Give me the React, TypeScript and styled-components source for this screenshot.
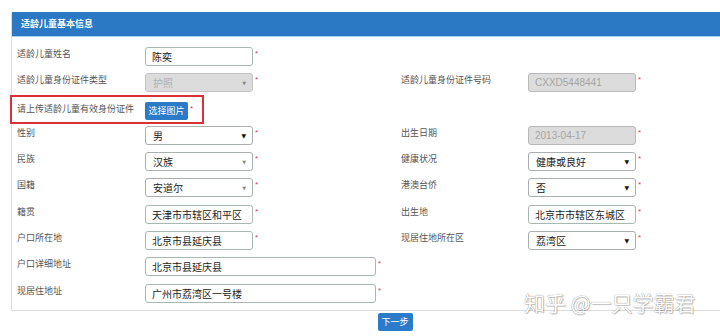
import styled, { createGlobalStyle } from "styled-components";

const GlobalStyle = createGlobalStyle`
  html, body {
    margin: 0;
    padding: 0;
    background: #fff;
    overflow: hidden;
  }
  body {
    font-family: "Liberation Sans", "Noto Sans CJK SC", sans-serif;
  }
`;

type Ctl = { kind: "input" | "select" | "disabled" | "disabledSelect"; value: string; arrow?: "dark" | "light"; wide?: boolean };

type RowData = {
  left: [string, Ctl];
  right?: [string, Ctl];
};

const rows: RowData[] = [
  { left: ["适龄儿童姓名", { kind: "input", value: "陈奕" }] },
  {
    left: ["适龄儿童身份证件类型", { kind: "disabledSelect", value: "护照", arrow: "light" }],
    right: ["适龄儿童身份证件号码", { kind: "disabled", value: "CXXD5448441" }],
  },
];

const rowsAfter: RowData[] = [
  {
    left: ["性别", { kind: "select", value: "男", arrow: "dark" }],
    right: ["出生日期", { kind: "disabled", value: "2013-04-17" }],
  },
  {
    left: ["民族", { kind: "select", value: "汉族", arrow: "light" }],
    right: ["健康状况", { kind: "select", value: "健康或良好", arrow: "dark" }],
  },
  {
    left: ["国籍", { kind: "select", value: "安道尔", arrow: "light" }],
    right: ["港澳台侨", { kind: "select", value: "否", arrow: "dark" }],
  },
  {
    left: ["籍贯", { kind: "input", value: "天津市市辖区和平区" }],
    right: ["出生地", { kind: "input", value: "北京市市辖区东城区" }],
  },
  {
    left: ["户口所在地", { kind: "input", value: "北京市县延庆县" }],
    right: ["现居住地所在区", { kind: "select", value: "荔湾区", arrow: "dark" }],
  },
  { left: ["户口详细地址", { kind: "input", value: "北京市县延庆县", wide: true }] },
  { left: ["现居住地址", { kind: "input", value: "广州市荔湾区一号楼", wide: true }] },
];

const Control = ({ c }: { c: Ctl }) => {
  const off = c.kind === "disabled" || c.kind === "disabledSelect";
  return (
    <FieldCell>
      {c.kind === "input" || c.kind === "disabled" ? (
        <TextInput readOnly value={c.value} $off={off} $wide={!!c.wide} />
      ) : (
        <SelectBox $off={off}>
          <span>{c.value}</span>
          <Arrow $dark={c.arrow === "dark"}>▼</Arrow>
        </SelectBox>
      )}
      <Star>*</Star>
    </FieldCell>
  );
};

const FormRow = ({ r }: { r: RowData }) => (
  <Row>
    <Label>{r.left[0]}</Label>
    <Control c={r.left[1]} />
    {r.right && (
      <>
        <Label>{r.right[0]}</Label>
        <Control c={r.right[1]} />
      </>
    )}
  </Row>
);

export default function App() {
  return (
    <>
      <GlobalStyle />
      <Page>
        <Panel>
          <Heading>适龄儿童基本信息</Heading>
          <Body>
            {rows.map((r, i) => (
              <FormRow key={i} r={r} />
            ))}
            <Row>
              <Highlight>
                <Label>请上传适龄儿童有效身份证件</Label>
                <PickButton>选择图片</PickButton>
                <Star>*</Star>
              </Highlight>
            </Row>
            {rowsAfter.map((r, i) => (
              <FormRow key={i} r={r} />
            ))}
          </Body>
        </Panel>
        <Footer>
          <NextButton>下一步</NextButton>
        </Footer>
        <Watermark>知乎 @一只学霸君</Watermark>
      </Page>
    </>
  );
}

const Page = styled.div`
  position: relative;
  padding: 12px 0 0 11px;
`;

const Panel = styled.div`
  border: 1px solid #dcdcdc;
  border-top: none;
  border-right: none;
  border-radius: 3px 0 0 0;
`;

const Heading = styled.div`
  height: 24px;
  background: #2b78c4;
  border-bottom: 1px solid #a9d0f2;
  color: #fff;
  font-family: "Noto Sans CJK SC", sans-serif;
  font-weight: 700;
  font-size: 9px;
  line-height: 24px;
  padding-left: 9px;
`;

const Body = styled.div`
  padding: 10px 0 0 5px;
`;

const Row = styled.div`
  display: grid;
  grid-template-columns: 128px 256px 127px 1fr;
  align-items: start;
  height: 26.3px;
`;

const Label = styled.div`
  font-family: "Noto Sans CJK SC", sans-serif;
  font-size: 9px;
  line-height: 12px;
  color: #555;
  padding-top: 1px;
  white-space: nowrap;
`;

const FieldCell = styled.div`
  display: flex;
  align-items: flex-start;
`;

const TextInput = styled.input<{ $off: boolean; $wide: boolean }>`
  box-sizing: border-box;
  width: ${(p) => (p.$wide ? "231px" : "108px")};
  height: 19px;
  margin: 0;
  padding: 0 6px;
  border: 1px solid ${(p) => (p.$off ? "#b9b9b9" : "#a7b8b3")};
  border-radius: 3px;
  background: ${(p) => (p.$off ? "#dcdcdc" : "#fff")};
  color: ${(p) => (p.$off ? "#a5a5a5" : "#222")};
  font-family: "Liberation Sans", "Noto Sans CJK SC", sans-serif;
  font-size: 10px;
  outline: none;
`;

const SelectBox = styled.div<{ $off: boolean }>`
  box-sizing: border-box;
  display: flex;
  align-items: center;
  justify-content: space-between;
  width: 108px;
  height: 19px;
  padding: 0 6px 0 7px;
  border: 1px solid ${(p) => (p.$off ? "#c4c4c4" : "#a9aeae")};
  border-radius: 3px;
  background: ${(p) => (p.$off ? "#dcdcdc" : "#fff")};
  color: ${(p) => (p.$off ? "#b0b0b0" : "#222")};
  font-family: "Noto Sans CJK SC", sans-serif;
  font-size: 10px;
`;

const Arrow = styled.span<{ $dark: boolean }>`
  font-family: "DejaVu Sans", sans-serif;
  font-size: ${(p) => (p.$dark ? "6px" : "5px")};
  color: ${(p) => (p.$dark ? "#111" : "#8a8a8a")};
`;

const Star = styled.span`
  margin: 2px 0 0 2px;
  color: #e2375a;
  font-size: 8px;
  line-height: 9px;
`;

const Highlight = styled.div`
  grid-column: 1 / 3;
  box-sizing: border-box;
  display: flex;
  align-items: flex-start;
  width: 194px;
  height: 29px;
  margin: -5px 0 0 -7px;
  padding: 4px 0 0 5px;
  border: 2px solid #d9303a;
  ${Label} {
    width: 128px;
    padding-top: 2px;
  }
  ${Star} {
    margin-top: 3px;
  }
`;

const PickButton = styled.div`
  margin-top: 1px;
  width: 43px;
  height: 18px;
  border-radius: 2px;
  background: #2b7bc8;
  color: #fff;
  font-family: "Noto Sans CJK SC", sans-serif;
  font-size: 9px;
  line-height: 18px;
  text-align: center;
`;

const Footer = styled.div`
  display: flex;
  justify-content: center;
  padding: 2px 0 0 59px;
`;

const NextButton = styled.div`
  width: 35px;
  height: 18px;
  border-radius: 2px;
  background: #2b7bc8;
  color: #fff;
  font-family: "Noto Sans CJK SC", sans-serif;
  font-size: 9px;
  line-height: 18px;
  text-align: center;
`;

const Watermark = styled.div`
  position: absolute;
  left: 524px;
  top: 289px;
  color: #fff;
  font-family: "Noto Sans CJK SC", sans-serif;
  font-size: 21px;
  line-height: 26px;
  white-space: nowrap;
  text-shadow: 0 0 1px rgba(0, 0, 0, 0.55), 1px 1px 1px rgba(0, 0, 0, 0.2);
`;
